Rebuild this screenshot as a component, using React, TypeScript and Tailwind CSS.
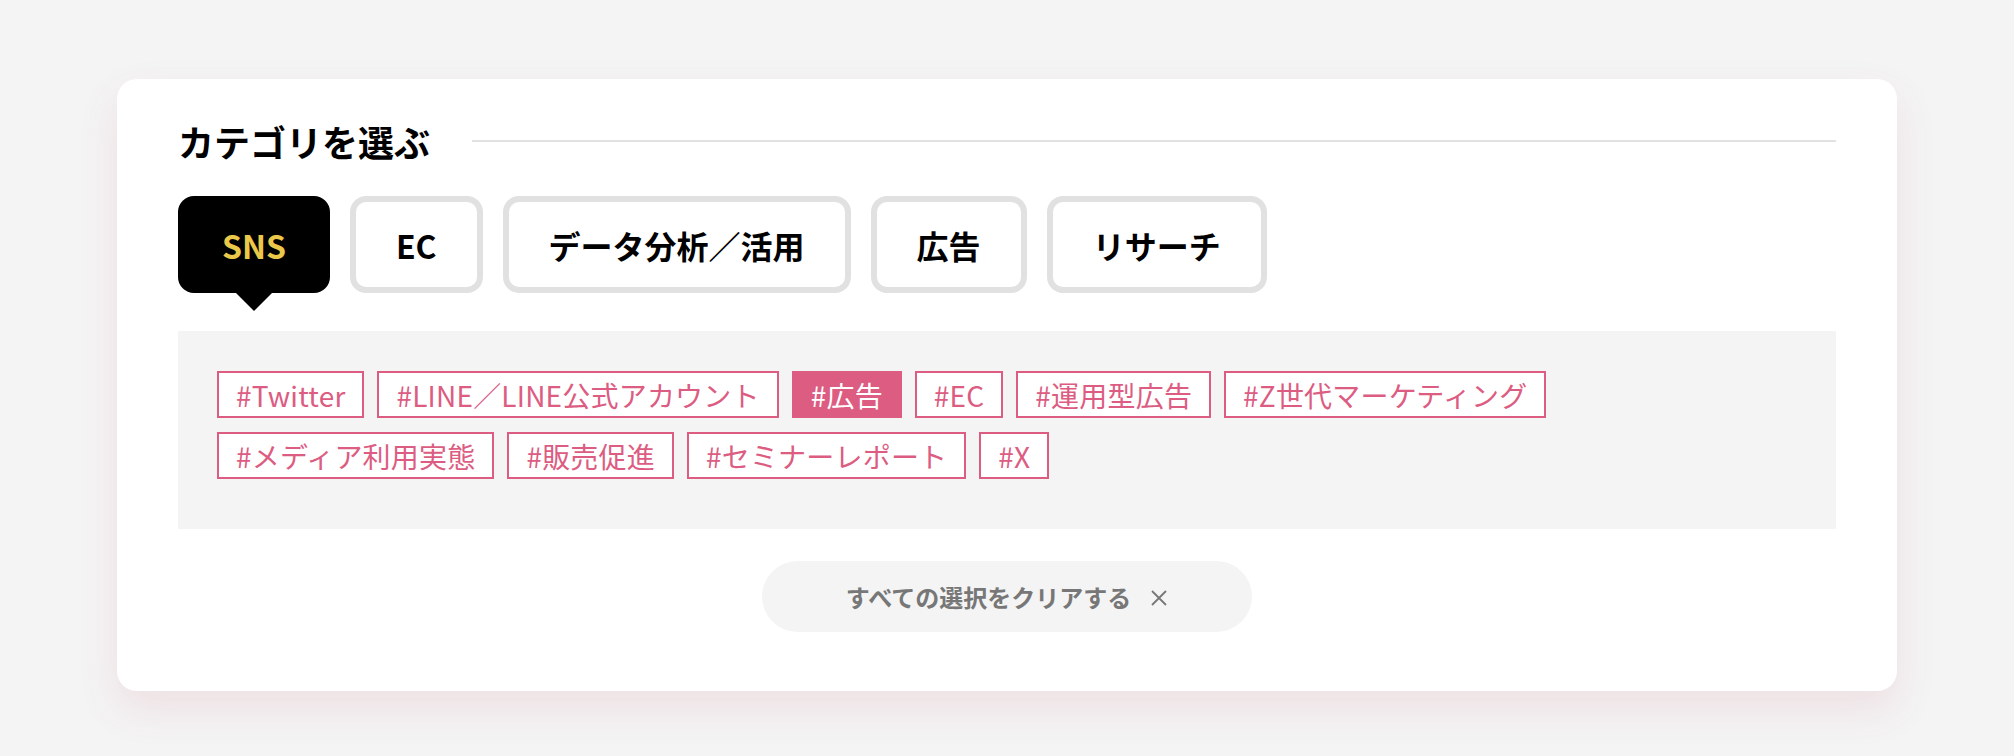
const categories = ["SNS", "EC", "データ分析／活用", "広告", "リサーチ"];

const tags = [
  "#Twitter",
  "#LINE／LINE公式アカウント",
  "#広告",
  "#EC",
  "#運用型広告",
  "#Z世代マーケティング",
  "#メディア利用実態",
  "#販売促進",
  "#セミナーレポート",
  "#X",
];

const activeCategory = "SNS";
const activeTag = "#広告";

function CategoryTab({ label, active }: { label: string; active: boolean }) {
  if (active) {
    return (
      <div className="relative">
        <button className="flex h-[97px] items-center rounded-[16px] border-[6px] border-black bg-black px-[38px] text-[32px] font-bold text-[#ebc84a]">
          {label}
        </button>
        <span className="absolute left-1/2 top-full h-0 w-0 -translate-x-1/2 border-x-[18px] border-t-[18px] border-x-transparent border-t-black" />
      </div>
    );
  }
  return (
    <button className="flex h-[97px] items-center rounded-[16px] border-[6px] border-[#e1e1e1] bg-white px-[40px] text-[32px] font-bold text-black">
      {label}
    </button>
  );
}

function Tag({ label, active }: { label: string; active: boolean }) {
  return (
    <span
      className={
        active
          ? "flex h-[47px] items-center border-2 border-[#dc5c82] bg-[#dc5c82] px-[17px] text-[28px] tracking-[0.2px] text-white"
          : "flex h-[47px] items-center border-2 border-[#dc5c82] bg-white px-[17px] text-[28px] tracking-[0.2px] text-[#dc5c82]"
      }
    >
      {label}
    </span>
  );
}

export default function App() {
  return (
    <div
      className="min-h-[756px] bg-[#f4f4f4] px-[117px] pt-[79px]"
      style={{ fontFamily: '"Noto Sans CJK JP", "Noto Sans", sans-serif' }}
    >
      <section className="rounded-[20px] bg-white px-[61px] pb-[59px] pt-[37px] shadow-[0_18px_40px_rgba(200,80,110,0.12)]">
        <div className="flex h-[50px] items-center gap-[42px]">
          <h2 className="text-[36px] font-bold leading-none text-black">カテゴリを選ぶ</h2>
          <div className="h-[2px] flex-1 bg-[#e1e1e1]" />
        </div>

        <div className="mt-[30px] flex gap-[20px]">
          {categories.map((c) => (
            <CategoryTab key={c} label={c} active={c === activeCategory} />
          ))}
        </div>

        <div className="mt-[38px] flex flex-wrap gap-x-[13px] gap-y-[14px] bg-[#f4f4f4] px-[39px] pb-[50px] pt-[40px]">
          {tags.map((t) => (
            <Tag key={t} label={t} active={t === activeTag} />
          ))}
        </div>

        <div className="mt-[32px] flex justify-center">
          <button className="flex h-[71px] items-center gap-[19px] rounded-full bg-[#f4f4f4] px-[84px] text-[24px] font-bold text-[#777777]">
            すべての選択をクリアする
            <svg width="18" height="18" viewBox="0 0 18 18" className="mt-[2px]">
              <path d="M2 2L16 16M16 2L2 16" stroke="#777777" strokeWidth="1.8" />
            </svg>
          </button>
        </div>
      </section>
    </div>
  );
}
